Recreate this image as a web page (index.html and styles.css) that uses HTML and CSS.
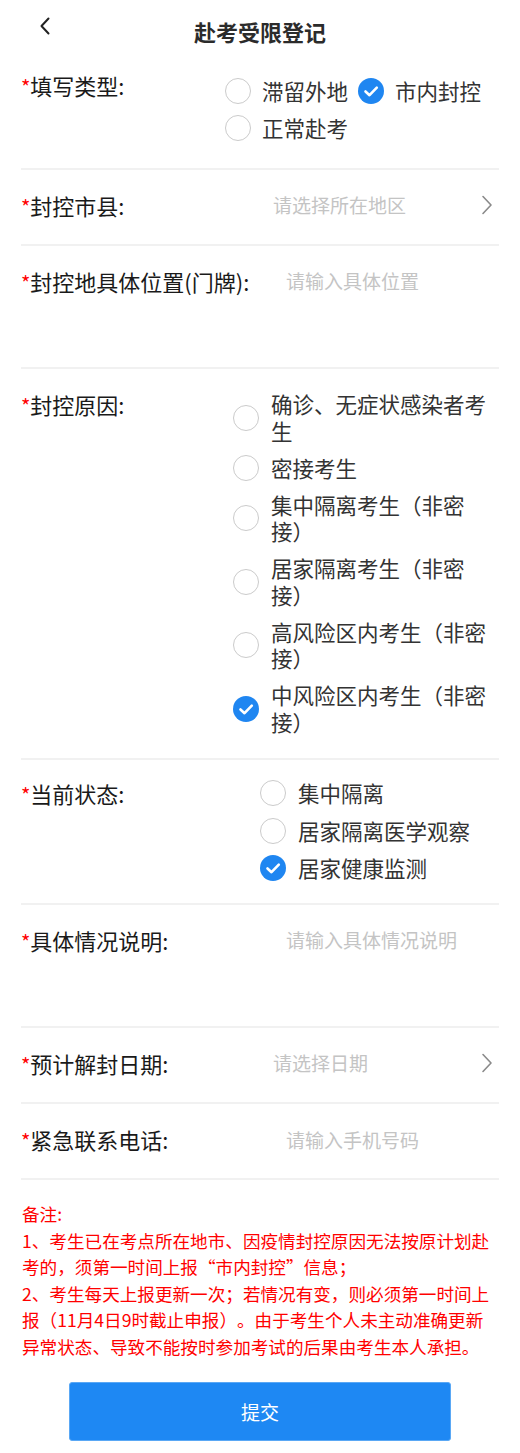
FILE: index.html
```html
<!DOCTYPE html>
<html lang="zh-CN">
<head>
<meta charset="UTF-8" />
<meta name="viewport" content="width=device-width, initial-scale=1" />
<title>赴考受限登记</title>
<link rel="stylesheet" href="styles.css">
</head>
<body>

<header class="nav">
  <a href="#" class="back">
    <svg width="12" height="18" viewBox="0 0 12 18"><path d="M9.5 1.5 L2.5 9 L9.5 16.5" fill="none" stroke="#222" stroke-width="2" stroke-linecap="round" stroke-linejoin="round"/></svg>
  </a>
  <h1>赴考受限登记</h1>
  <span></span>
</header>

<form class="form" id="regForm">
  <!-- 填写类型 -->
  <div class="row row-type">
    <label class="label"><i>*</i>填写类型:</label>
    <div class="radios radios-type">
      <label class="opt"><span class="dot"></span><span class="txt">滞留外地</span></label>
      <label class="opt"><span class="dot on"><svg viewBox="0 0 26 26"><path d="M7.5 13.5 L11.5 17.2 L18.8 9.6" fill="none" stroke="#fff" stroke-width="2.6" stroke-linecap="round" stroke-linejoin="round"/></svg></span><span class="txt">市内封控</span></label>
      <label class="opt"><span class="dot"></span><span class="txt">正常赴考</span></label>
    </div>
  </div>

  <div class="row">
    <label class="label"><i>*</i>封控市县:</label>
    <div class="pick">
      <span class="ph">请选择所在地区</span>
      <svg width="12" height="20" viewBox="0 0 12 20"><path d="M2 1.5 L10 10 L2 18.5" fill="none" stroke="#8a8a8a" stroke-width="1.6" stroke-linecap="round" stroke-linejoin="round"/></svg>
    </div>
  </div>

  <div class="row row-area">
    <label class="label"><i>*</i>封控地具体位置(门牌):</label>
    <textarea class="area" placeholder="请输入具体位置"></textarea>
  </div>

  <!-- 封控原因 -->
  <div class="row row-reason">
    <label class="label"><i>*</i>封控原因:</label>
    <div class="radios radios-reason">
      <label class="opt"><span class="dot"></span><span class="txt">确诊、无症状感染者考生</span></label>
      <label class="opt"><span class="dot"></span><span class="txt">密接考生</span></label>
      <label class="opt"><span class="dot"></span><span class="txt">集中隔离考生（非密接）</span></label>
      <label class="opt"><span class="dot"></span><span class="txt">居家隔离考生（非密接）</span></label>
      <label class="opt"><span class="dot"></span><span class="txt">高风险区内考生（非密接）</span></label>
      <label class="opt"><span class="dot on"><svg viewBox="0 0 26 26"><path d="M7.5 13.5 L11.5 17.2 L18.8 9.6" fill="none" stroke="#fff" stroke-width="2.6" stroke-linecap="round" stroke-linejoin="round"/></svg></span><span class="txt">中风险区内考生（非密接）</span></label>
    </div>
  </div>

  <!-- 当前状态 -->
  <div class="row row-state">
    <label class="label"><i>*</i>当前状态:</label>
    <div class="radios radios-state">
      <label class="opt"><span class="dot"></span><span class="txt">集中隔离</span></label>
      <label class="opt"><span class="dot"></span><span class="txt">居家隔离医学观察</span></label>
      <label class="opt"><span class="dot on"><svg viewBox="0 0 26 26"><path d="M7.5 13.5 L11.5 17.2 L18.8 9.6" fill="none" stroke="#fff" stroke-width="2.6" stroke-linecap="round" stroke-linejoin="round"/></svg></span><span class="txt">居家健康监测</span></label>
    </div>
  </div>

  <div class="row row-area">
    <label class="label"><i>*</i>具体情况说明:</label>
    <textarea class="area" placeholder="请输入具体情况说明"></textarea>
  </div>

  <div class="row">
    <label class="label"><i>*</i>预计解封日期:</label>
    <div class="pick">
      <span class="ph">请选择日期</span>
      <svg width="12" height="20" viewBox="0 0 12 20"><path d="M2 1.5 L10 10 L2 18.5" fill="none" stroke="#8a8a8a" stroke-width="1.6" stroke-linecap="round" stroke-linejoin="round"/></svg>
    </div>
  </div>

  <div class="row">
    <label class="label"><i>*</i>紧急联系电话:</label>
    <input class="text" type="tel" placeholder="请输入手机号码" />
  </div>
</form>

<div class="notes">
  <p>备注:</p>
  <p>1、考生已在考点所在地市、因疫情封控原因无法按原计划赴考的，须第一时间上报“市内封控”信息；</p>
  <p>2、考生每天上报更新一次；若情况有变，则必须第一时间上报（11月4日9时截止申报）。由于考生个人未主动准确更新异常状态、导致不能按时参加考试的后果由考生本人承担。</p>
</div>

<div class="actions">
  <button type="submit" form="regForm" class="submit">提交</button>
</div>

</body>
</html>
```

FILE: styles.css
```css
body {
  margin: 0;
  padding: 0;
  background: #fff;
  color: #1c1c1c;
  font-family: "Noto Sans CJK SC", "Noto Sans", sans-serif;
  text-spacing-trim: space-all;
}

/* 顶部导航 */
.nav {
  height: 50px;
  padding-top: 12px;
  box-sizing: border-box;
  display: grid;
  grid-template-columns: 1fr auto 1fr;
  align-items: start;
}
.back {
  display: block;
  margin: 5px 0 0 39px;
  width: 12px;
  height: 18px;
}
.back svg { display: block; }
.nav h1 {
  margin: 0;
  font-size: 22px;
  line-height: 38px;
  font-weight: bold;
  color: #2b2b2b;
}

/* 表单 */
.form {
  margin: 0 21px;
}
.row {
  display: flex;
  align-items: flex-start;
  padding: 22px 0 25.5px;
  border-bottom: 2px solid #f1f1f1;
}
.label {
  flex: none;
  height: 26.5px;
  font-size: 22px;
  line-height: 26.5px;
  color: #1a1a1a;
  white-space: nowrap;
}
.label i {
  font-style: normal;
  color: #f00;
  font-size: 20px;
  line-height: 0;
}

.pick {
  margin-left: auto;
  width: 226px;
  display: flex;
  align-items: center;
  justify-content: space-between;
  padding-right: 6px;
  box-sizing: border-box;
  height: 26.5px;
}
.ph {
  font-size: 19px;
  line-height: 26.5px;
  color: #c4c4c4;
}
.pick svg { display: block; }

.text, .area {
  display: block;
  margin-left: auto;
  width: 213px;
  border: none;
  outline: none;
  padding: 0;
  background: transparent;
  font-family: inherit;
  font-size: 19px;
  line-height: 26.5px;
  color: #333;
  resize: none;
}
.text { height: 26.5px; }
.area { height: 74px; }
.row-area { padding-bottom: 25px; }
.text::placeholder, .area::placeholder { color: #c4c4c4; }

/* 单选 */
.radios {
  margin-left: auto;
  display: flex;
  flex-direction: column;
  gap: 10.5px;
}
.opt {
  display: flex;
  align-items: center;
  gap: 12px;
  font-size: 21.5px;
  line-height: 26.5px;
  color: #333;
}
.dot {
  flex: none;
  width: 26px;
  height: 26px;
  border-radius: 50%;
  border: 1.5px solid #cbcbcb;
  box-sizing: border-box;
}
.dot.on {
  border: none;
  background: #1f86f1;
}
.dot svg { display: block; width: 26px; height: 26px; }

.row-type { padding-bottom: 26.5px; }
.radios-type {
  width: 274px;
  flex-direction: row;
  flex-wrap: wrap;
  column-gap: 10px;
  margin-top: 6px;
}
.radios-type .opt { gap: 11px; }

.row-reason { padding-bottom: 23px; }
.radios-reason { width: 266px; }
.radios-reason .txt { max-width: 228px; }

.row-state { padding: 20px 0 21.5px; }
.radios-state { width: 239px; gap: 11px; }

/* 备注 */
.notes {
  margin: 21px 21px 0 22px;
  color: #f00;
  font-size: 17.6px;
  line-height: 26.5px;
}
.notes p { margin: 0; }

.actions {
  padding: 22px 0 11px;
  text-align: center;
}
.submit {
  width: 382px;
  height: 59px;
  border: 1px solid #5aa8f5;
  border-radius: 3px;
  background: #1e88f3;
  color: #fff;
  font-family: inherit;
  font-size: 19px;
  cursor: pointer;
}
```
